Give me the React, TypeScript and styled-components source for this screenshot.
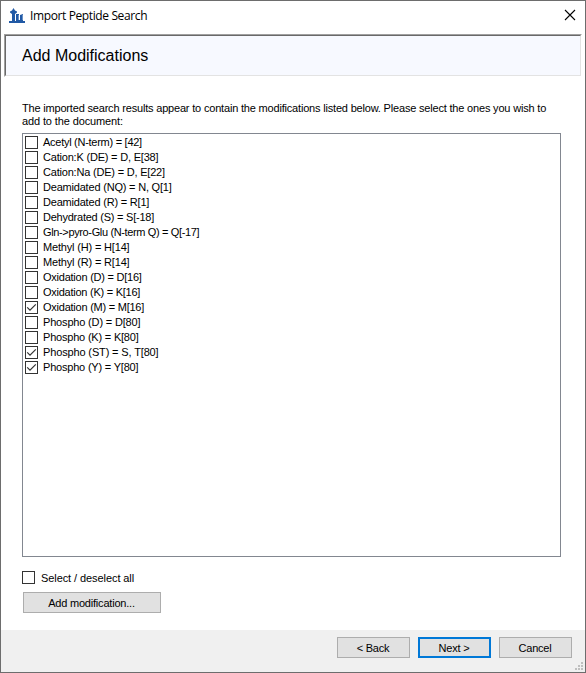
import React, { useState } from 'react';
import styled, { createGlobalStyle, css } from 'styled-components';

const GlobalStyle = createGlobalStyle`
  * { box-sizing: border-box; }
  body { margin: 0; background: #fff; overflow: hidden; }
`;

const Window = styled.div`
  width: 586px;
  height: 673px;
  display: flex;
  flex-direction: column;
  border: 1px solid #6d6d6d;
  background: #fff;
  color: #000;
  font: 11px/13px "Liberation Sans", Arial, sans-serif;
  white-space: nowrap;
`;

const TitleBar = styled.header`
  height: 33px;
  flex: none;
  display: flex;
  align-items: flex-start;
  padding: 7px 9px 0 8px;
`;

const Title = styled.span`
  flex: 1;
  margin: 0 0 0 5px;
  font: 12px/16px "Open Sans", "Noto Sans", sans-serif;
  letter-spacing: -0.38px;
`;

const CloseIcon = styled.svg`
  margin-top: 1px;
`;

const Banner = styled.div`
  height: 43px;
  flex: none;
  margin: 0 3px;
  border: 1px solid #fff;
  border-top-color: #a0a0a0;
  border-left-color: #a0a0a0;
`;

const BannerInner = styled.h1`
  height: 41px;
  margin: 0;
  padding: 0 0 0 16px;
  border: 1px solid #e3e3e3;
  border-top-color: #696969;
  border-left-color: #696969;
  background: #f7f9ff;
  font-size: 16px;
  font-weight: 400;
  line-height: 39px;
`;

const Content = styled.main`
  flex: 1;
  padding: 25px 24px 0 21px;
`;

const Text = styled.span<{ $track?: number }>`
  letter-spacing: ${(p) => p.$track ?? 0}px;
`;

const Intro = styled.p`
  margin: 0 0 5px;
  display: flex;
  flex-direction: column;
`;

const ListBox = styled.div`
  width: 539px;
  height: 424px;
  padding: 1px;
  border: 1px solid #828790;
`;

const Row = styled.label<{ $gap?: number }>`
  display: flex;
  align-items: center;
  height: 15px;
  padding-left: 1px;
  gap: ${(p) => p.$gap ?? 5}px;
`;

const SelectAll = styled(Row)`
  margin-top: 13px;
  padding: 0;
`;

const SelectAllText = styled(Text)`
  padding-top: 2px;
`;

const Box = styled.span`
  width: 13px;
  height: 13px;
  flex: none;
  display: flex;
  border: 1px solid #333;
  background: #fff;
`;

const HiddenInput = styled.input`
  appearance: none;
  width: 0;
  height: 0;
  margin: 0;
`;

const Button = styled.button<{ $primary?: boolean; $width?: number }>`
  width: ${(p) => p.$width ?? 73}px;
  height: 21px;
  padding: 2px 1px 0 0;
  border: 1px solid #adadad;
  background: #e1e1e1;
  color: #000;
  font: inherit;
  ${(p) => p.$primary && css`border: 2px solid #0078d7;`}
`;

const AddButton = styled(Button)`
  display: block;
  margin: 7px 0 0 1px;
`;

const Footer = styled.footer`
  height: 42px;
  flex: none;
  display: flex;
  align-items: flex-start;
  justify-content: flex-end;
  gap: 8px;
  padding: 7px 2px 0 0;
  background: #f0f0f0;
`;

const Grip = styled.svg`
  align-self: flex-end;
  margin: 0 0 2px -5px;
`;

const AppIcon = () => (
  <svg width="16" height="16" viewBox="0 0 16 16" fill="#2159a5">
    <path d="M4.5 0 6 2.5 8 3.5v1L6 6v7h1V6h3v6h1V7l3-1v7h2v2H0v-2h3V6L1 4.5v-1l2-1z" />
    <path d="M9 7h1v5H9zM13 7h1v5h-1z" fill="#6a92c6" />
  </svg>
);

const Check = ({ checked, onChange }: { checked: boolean; onChange: () => void }) => (
  <Box>
    <HiddenInput type="checkbox" checked={checked} onChange={onChange} />
    {checked && (
      <svg width="11" height="11" viewBox="0 0 11 11" fill="none" stroke="#333" strokeWidth="1.2">
        <path d="M1.2 5.3 4 8.1 9.8 2.3" />
      </svg>
    )}
  </Box>
);

const modifications: { name: string; track: number; checked?: boolean }[] = [
  { name: 'Acetyl (N-term) = [42]', track: -0.27 },
  { name: 'Cation:K (DE) = D, E[38]', track: -0.2 },
  { name: 'Cation:Na (DE) = D, E[22]', track: -0.2 },
  { name: 'Deamidated (NQ) = N, Q[1]', track: -0.2 },
  { name: 'Deamidated (R) = R[1]', track: -0.2 },
  { name: 'Dehydrated (S) = S[-18]', track: -0.24 },
  { name: 'Gln->pyro-Glu (N-term Q) = Q[-17]', track: -0.36 },
  { name: 'Methyl (H) = H[14]', track: -0.17 },
  { name: 'Methyl (R) = R[14]', track: -0.17 },
  { name: 'Oxidation (D) = D[16]', track: -0.24 },
  { name: 'Oxidation (K) = K[16]', track: -0.25 },
  { name: 'Oxidation (M) = M[16]', track: -0.24, checked: true },
  { name: 'Phospho (D) = D[80]', track: -0.17 },
  { name: 'Phospho (K) = K[80]', track: -0.2 },
  { name: 'Phospho (ST) = S, T[80]', track: -0.14, checked: true },
  { name: 'Phospho (Y) = Y[80]', track: -0.2, checked: true },
];

export default function App() {
  const [selected, setSelected] = useState(modifications.map((m) => !!m.checked));
  const all = selected.every(Boolean);
  const toggle = (index: number) => setSelected((s) => s.map((v, i) => (i === index ? !v : v)));

  return (
    <>
      <GlobalStyle />
      <Window>
        <TitleBar>
          <AppIcon />
          <Title>Import Peptide Search</Title>
          <CloseIcon width="12" height="12" viewBox="0 0 12 12" stroke="#000" strokeWidth="1.1">
            <path d="M1 1 11 11M11 1 1 11" />
          </CloseIcon>
        </TitleBar>
        <Banner>
          <BannerInner>Add Modifications</BannerInner>
        </Banner>
        <Content>
          <Intro>
            <Text $track={-0.185}>The imported search results appear to contain the modifications listed below. Please select the ones you wish to</Text>
            <Text $track={-0.12}>add to the document:</Text>
          </Intro>
          <ListBox>
            {modifications.map((m, i) => (
              <Row key={m.name}>
                <Check checked={selected[i]} onChange={() => toggle(i)} />
                <Text $track={m.track}>{m.name}</Text>
              </Row>
            ))}
          </ListBox>
          <SelectAll $gap={6}>
            <Check checked={all} onChange={() => setSelected(selected.map(() => !all))} />
            <SelectAllText $track={-0.08}>Select / deselect all</SelectAllText>
          </SelectAll>
          <AddButton $width={138}><Text $track={-0.2}>Add modification...</Text></AddButton>
        </Content>
        <Footer>
          <Button><Text $track={-0.2}>&lt; Back</Text></Button>
          <Button $primary><Text $track={-0.15}>Next &gt;</Text></Button>
          <Button><Text $track={-0.2}>Cancel</Text></Button>
          <Grip width="8" height="8" fill="#bfbfbf">
            <path d="M6 0h2v2H6zM3 3h2v2H3zM6 3h2v2H6zM0 6h2v2H0zM3 6h2v2H3zM6 6h2v2H6z" />
          </Grip>
        </Footer>
      </Window>
    </>
  );
}
